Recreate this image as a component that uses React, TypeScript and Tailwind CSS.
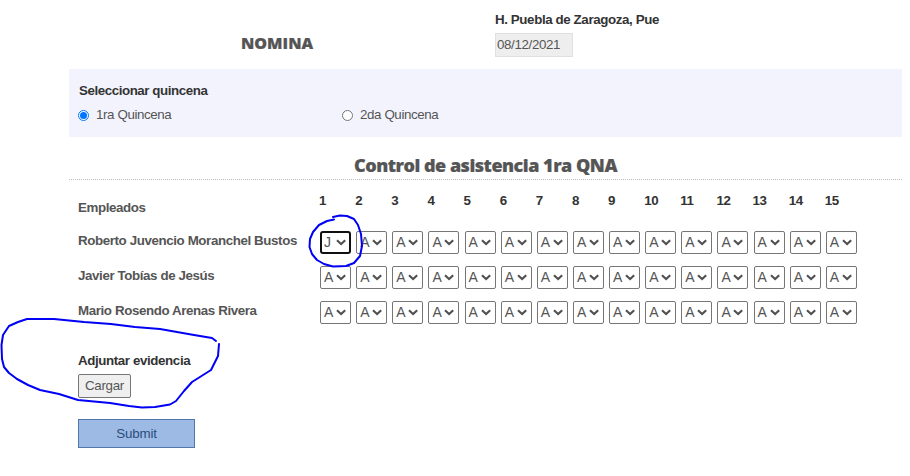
const days = Array.from({ length: 15 }, (_, i) => i + 1);
const employees = ["Roberto Juvencio Moranchel Bustos", "Javier Tobías de Jesús", "Mario Rosendo Arenas Rivera"];

function DayPicker({ value, focused }: { value: string; focused: boolean }) {
  return (
    <button
      className={
        "flex h-[23px] w-[31px] items-center bg-white text-[14px] leading-[21px] text-[#555] " +
        (focused ? "rounded-[3px] border-2 border-[#101010] pl-[2px]" : "rounded-[2px] border border-[#767676] pl-[3px]")
      }
    >
      <span className="w-3 shrink-0 text-left">{value}</span>
      <svg className="h-[7px] w-[11px] shrink-0" viewBox="0 0 11 7" fill="none" stroke="#505050" strokeWidth="2.1">
        <path d="M1 1.2L5.1 5L9.2 1.2" />
      </svg>
    </button>
  );
}

export default function App() {
  return (
    <main className="relative h-[476px] w-[910px] overflow-hidden bg-white font-['Liberation_Sans',Arial,sans-serif] text-[13.33px] tracking-[-0.39px] text-[#555]">
      <header className="flex h-[69px] pl-[241px]">
        <h1 className="w-[254px] pt-[33px] font-['Open_Sans',sans-serif] text-[16px] leading-5 font-extrabold tracking-normal whitespace-nowrap [-webkit-text-stroke:0.2px_#555]">NOMINA</h1>
        <div className="pt-3">
          <p className="leading-4 font-bold whitespace-nowrap text-[#333]">H. Puebla de Zaragoza, Pue</p>
          <div className="mt-[5px] h-6 w-[78px] border border-[#e0e0e0] bg-[#eee] pl-px leading-[22px] tracking-[-0.36px]">08/12/2021</div>
        </div>
      </header>

      <section className="ml-[69px] h-[68px] w-[833px] bg-[#f3f3fe] pt-[14px] pl-[10px]">
        <h2 className="leading-4 font-bold tracking-[-0.43px] text-[#333]">Seleccionar quincena</h2>
        <div className="mt-2 flex">
          <label className="flex w-[264px] items-center leading-4">
            <span className="-ml-px mr-[7px] flex size-[11px] items-center justify-center rounded-full border border-[#0075ff] bg-white">
              <span className="size-[7px] rounded-full bg-[#0075ff]" />
            </span>
            1ra Quincena
          </label>
          <label className="flex items-center leading-4">
            <span className="-ml-px mr-[7px] size-[11px] rounded-full border border-[#767676] bg-white" />
            2da Quincena
          </label>
        </div>
      </section>

      <h2 className="ml-[69px] h-[43px] w-[833px] border-b border-dotted border-[#bbb] pt-[16px] pl-[285px] font-['Open_Sans',sans-serif] text-[18px] leading-6 font-extrabold tracking-[-0.49px] whitespace-nowrap [-webkit-text-stroke:0.2px_#555]">
        Control de asistencia 1ra QNA
      </h2>

      <section className="ml-[78px]">
        <div className="flex h-[51px]">
          <h3 className="w-[241px] pt-[20px] leading-4 font-bold">Empleados</h3>
          <div className="flex pt-[13px]">
            {days.map((d) => (
              <span key={d} className="w-[36.14px] leading-4 font-bold text-[#333]">{d}</span>
            ))}
          </div>
        </div>
        {employees.map((name, row) => (
          <div key={name} className="flex h-[35px]">
            <span className="w-[242px] pt-[2px] leading-4 font-bold whitespace-nowrap">{name}</span>
            {days.map((d) => (
              <div key={d} className="w-[36.14px] shrink-0">
                <DayPicker value={row === 0 && d === 1 ? "J" : "A"} focused={row === 0 && d === 1} />
              </div>
            ))}
          </div>
        ))}
        <h3 className="mt-[17px] leading-4 font-bold text-[#333]">Adjuntar evidencia</h3>
        <button className="mt-[5px] block h-6 w-[53px] rounded-[2px] border border-[#767676] bg-[#efefef] leading-[22px] tracking-[-0.3px]">Cargar</button>
        <button className="mt-[21px] block h-[29px] w-[117px] border border-[#5078a8] bg-[#9cbae4] leading-[27px] tracking-[-0.2px] text-[#294d7d]">Submit</button>
      </section>

      <svg className="pointer-events-none absolute inset-0" width="910" height="476" fill="none" stroke="#0000f5" strokeWidth="2" strokeLinecap="round" strokeLinejoin="round">
        <path d="M334 219.5L327 221L319 225L313 232L310 239L309.5 247L312 254L317 260L324 264L333 266.5L346 266L354 263L360 256L362 246L361 234L358 225L354 219L347 216L340 215.5L333 217" />
        <path d="M216 341L212 338L194 335L160 329L135 327L111 324L84 322L54 319L27 319L18 322L9 326L3 335L1.5 345L2 359L4 367L9 373L17 379L28 385L40 390L59 394L78 400L110 403L129 406L142 407.5L155 407L170 404.5L176 401L184 391L192 382L211 370L218 356L219 344" />
      </svg>
    </main>
  );
}
